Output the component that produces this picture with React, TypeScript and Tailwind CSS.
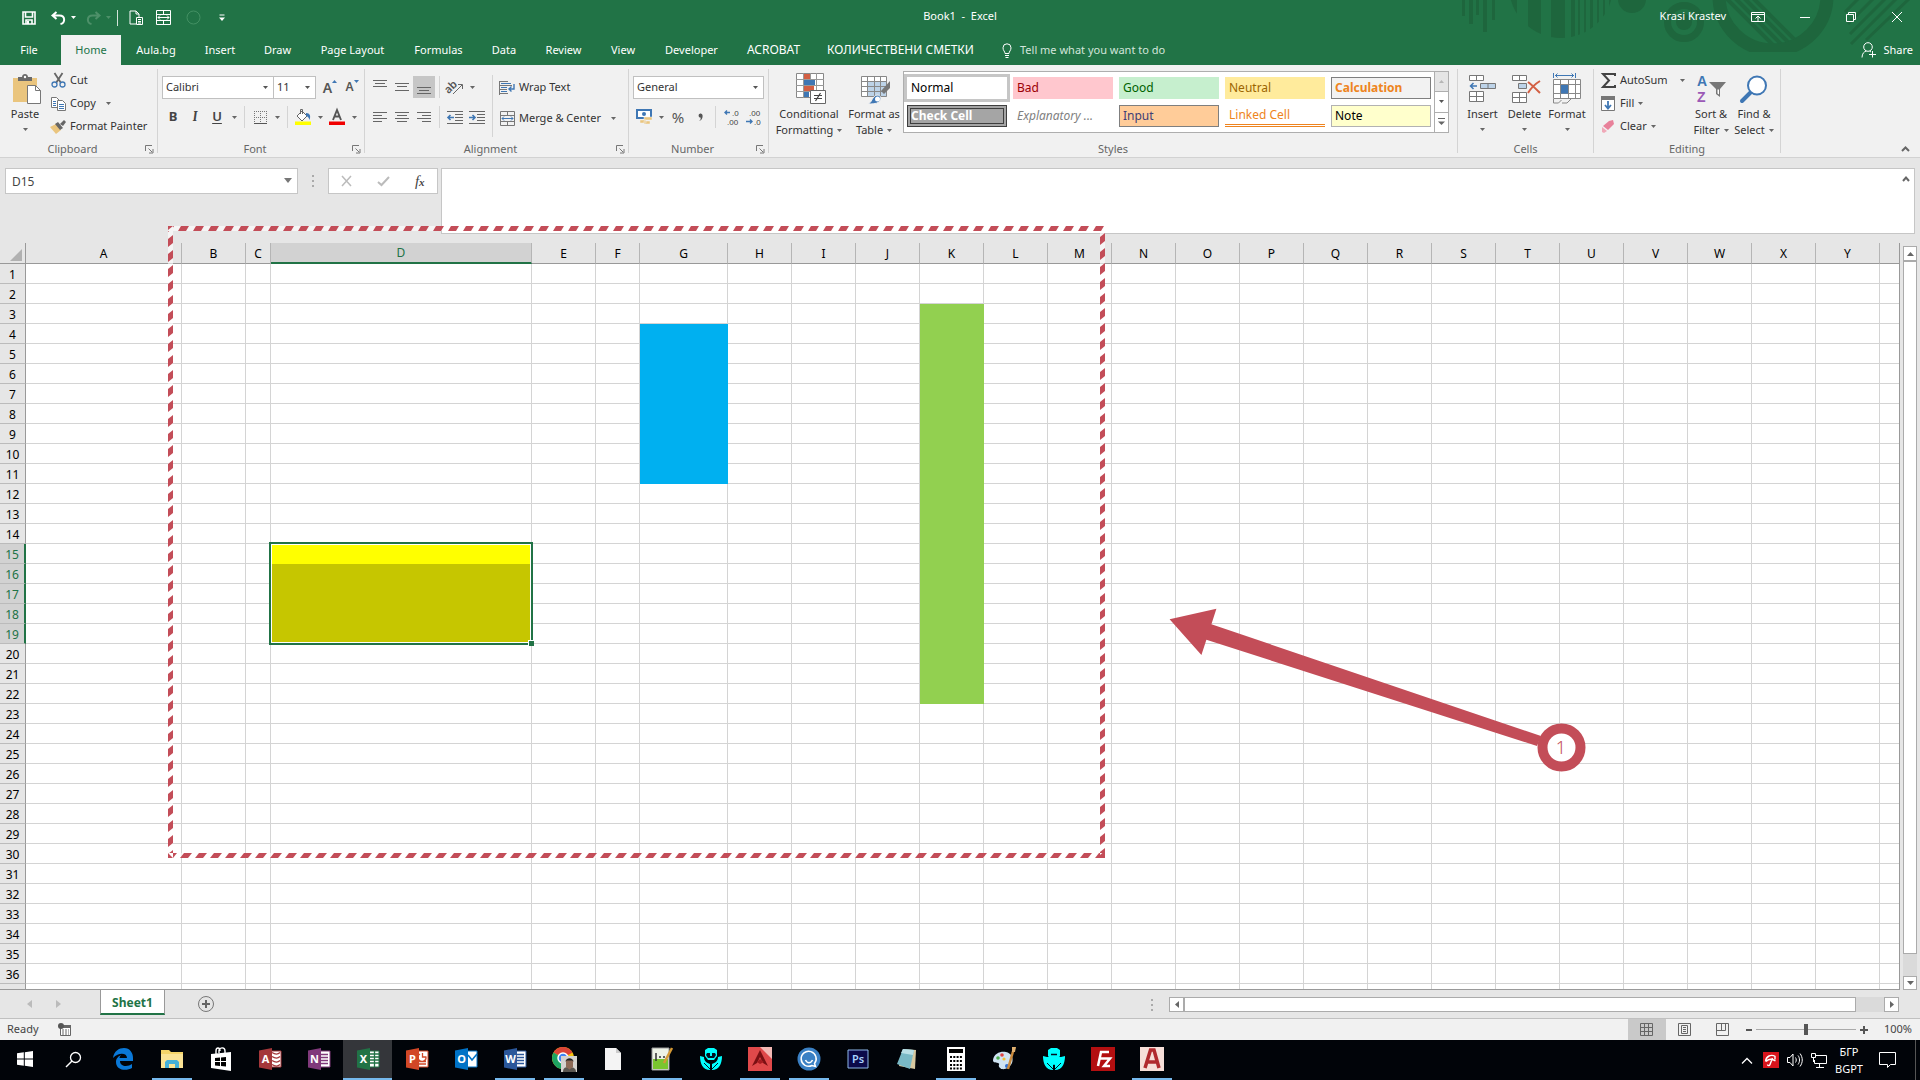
import type { ReactNode } from 'react';
import clsx from 'clsx';

const COLUMNS = [
  { name: 'A', width: 'w-[156px]' },
  { name: 'B', width: 'w-[64px]' },
  { name: 'C', width: 'w-[25px]' },
  { name: 'D', width: 'w-[261px]' },
  { name: 'E', width: 'w-[64px]' },
  { name: 'F', width: 'w-[44px]' },
  { name: 'G', width: 'w-[88px]' },
  ...'HIJKLMNOPQRSTUVWXY'.split('').map((name) => ({ name, width: 'w-[64px]' })),
];

const ROWS = Array.from({ length: 37 }, (_, i) => i + 1);

const TABS = [
  { label: 'Home', width: 'w-[60px]' },
  { label: 'Aula.bg', width: 'w-[70px]' },
  { label: 'Insert', width: 'w-[58px]' },
  { label: 'Draw', width: 'w-[57px]' },
  { label: 'Page Layout', width: 'w-[93px]' },
  { label: 'Formulas', width: 'w-[79px]' },
  { label: 'Data', width: 'w-[52px]' },
  { label: 'Review', width: 'w-[67px]' },
  { label: 'View', width: 'w-[52px]' },
  { label: 'Developer', width: 'w-[85px]' },
  { label: 'ACROBAT', width: 'w-[79px] text-[12px]' },
  { label: 'КОЛИЧЕСТВЕНИ СМЕТКИ', width: 'w-[175px] text-[12px]' },
];

const CELL_STYLES = [
  { label: 'Normal', look: 'pl-1 bg-white text-black outline-3 outline-[#c6c6c6]' },
  { label: 'Bad', look: 'pl-1 bg-[#ffc7ce] text-[#9c0006]' },
  { label: 'Good', look: 'pl-1 bg-[#c6efce] text-[#006100]' },
  { label: 'Neutral', look: 'pl-1 bg-[#ffeb9c] text-[#9c6500]' },
  { label: 'Calculation', look: 'pl-[3px] bg-[#f2f2f2] text-[#ee8420] font-bold border border-[#7f7f7f]' },
  { label: 'Check Cell', look: 'bg-[#a5a5a5] text-white font-bold border-4 border-double border-[#3f3f3f]' },
  { label: 'Explanatory ...', look: 'pl-1 bg-white text-[#7f7f7f] italic' },
  { label: 'Input', look: 'pl-[3px] bg-[#ffcc99] text-[#3f3f76] border border-[#7f7f7f]' },
  { label: 'Linked Cell', look: 'pl-1 bg-white text-[#ee8420] border-b-3 border-double border-[#ee8420]' },
  { label: 'Note', look: 'pl-[3px] bg-[#ffffcc] text-black border border-[#b2b2b2]' },
];

function cellFill(col: string, row: number) {
  if (col === 'G' && row >= 4 && row <= 11) return 'bg-[#00b0f0] border-[#00b0f0]';
  if (col === 'K' && row >= 3 && row <= 22) return 'bg-[#92d050] border-[#92d050]';
  if (col === 'D' && row === 15) return 'bg-[#ffff00] border-[#ffff00]';
  if (col === 'D' && row > 15 && row <= 19) return 'bg-[#c6c600] border-[#c6c600]';
  return 'border-[#d4d4d4]';
}

function Svg({ w, h, children, className }: { w: number; h: number; children: ReactNode; className?: string }) {
  return (
    <svg
      width={w}
      height={h}
      viewBox={`0 0 ${w} ${h}`}
      fill="none"
      className={clsx('shrink-0 overflow-visible', className)}
      aria-hidden="true"
    >
      {children}
    </svg>
  );
}

function Caret({ className }: { className?: string }) {
  return (
    <Svg w={5} h={3} className={className}>
      <path d="M0 0h5L2.5 3z" fill="currentColor" />
    </Svg>
  );
}

function Sep({ className }: { className?: string }) {
  return <div className={clsx('w-px shrink-0 bg-[#d4d4d4]', className)} />;
}

function IconButton({ label, children, active }: { label: string; children: ReactNode; active?: boolean }) {
  return (
    <button
      aria-label={label}
      className={clsx('flex h-[22px] w-[22px] shrink-0 items-center justify-center', active && 'bg-[#c6c6c6]')}
    >
      {children}
    </button>
  );
}

function CaretButton({ label }: { label: string }) {
  return (
    <button aria-label={label} className="flex h-[22px] w-3 shrink-0 items-center justify-center text-[#666]">
      <Caret />
    </button>
  );
}

function Combo({ label, value, className }: { label: string; value: string; className: string }) {
  return (
    <div className={clsx('relative h-[23px] shrink-0', className)}>
      <select
        aria-label={label}
        className="h-full w-full appearance-none border border-[#c0c0c0] bg-white pl-[3px] text-[11px] text-[#333]"
      >
        <option>{value}</option>
      </select>
      <Caret className="pointer-events-none absolute top-[10px] right-[6px] text-[#555]" />
    </div>
  );
}

function Group({ title, className, launcher, children }: { title: string; className: string; launcher?: boolean; children: ReactNode }) {
  return (
    <section className={clsx('flex shrink-0', className)}>
      <div className="flex min-w-0 flex-1 flex-col">
        <div className="flex min-h-0 flex-1">{children}</div>
        <div className="flex h-4 items-center text-[#666]">
          <span className="flex-1 text-center">{title}</span>
          {launcher && (
            <button aria-label={`${title} settings`} className="mr-[3px]">
              <Svg w={9} h={9}>
                <path d="M.5 6V.5H7M3.5 3.5L7 7M8 4v4H4" stroke="#777" />
              </Svg>
            </button>
          )}
        </div>
      </div>
      <Sep className="my-1" />
    </section>
  );
}

function BigButton({ icon, lines, className, inlineCaret }: { icon: ReactNode; lines: string[]; className: string; inlineCaret?: boolean }) {
  return (
    <button className={clsx('flex shrink-0 flex-col items-center pt-[7px]', className)}>
      <span className="flex h-[34px] items-center pb-px">{icon}</span>
      {lines.map((line, i) => (
        <span key={line} className="flex h-4 items-center gap-1 whitespace-nowrap">
          {line}
          {inlineCaret && i === lines.length - 1 && <Caret className="text-[#666]" />}
        </span>
      ))}
      {!inlineCaret && <Caret className="mt-[6px] text-[#666]" />}
    </button>
  );
}

function SmallButton({ icon, label, caret }: { icon: ReactNode; label: string; caret?: string }) {
  return (
    <button className="flex h-[23px] items-center whitespace-nowrap">
      <span className="mr-1 flex w-4 shrink-0 justify-center">{icon}</span>
      {label}
      {caret && <Caret className={clsx('text-[#666]', caret)} />}
    </button>
  );
}

function Lines({ spans }: { spans: number[][] }) {
  return (
    <Svg w={14} h={14}>
      {spans.map(([x, y, w]) => (
        <path key={y} d={`M${x} ${y + 0.5}h${w}`} stroke="#666" />
      ))}
    </Svg>
  );
}

function MergeIcon({ color, arrow }: { color: string; arrow: string }) {
  return (
    <Svg w={15} h={15}>
      <path d="M.5 .5h14v14H.5zM.5 4.5h14M.5 10.5h14M7.5 .5v4M7.5 10.5v4" stroke={color} />
      <path d="M2 7.5h11M4 5.5l-2 2 2 2M11 5.5l2 2-2 2" stroke={arrow} />
    </Svg>
  );
}

function TitleArt() {
  return (
    <svg className="absolute top-0 right-0" width="480" height="65" viewBox="0 0 480 65" fill="none" aria-hidden="true">
      <defs>
        <clipPath id="art-disc">
          <circle cx="121" cy="-14" r="52" />
        </clipPath>
        <clipPath id="art-inner">
          <circle cx="333" cy="-4" r="48" />
        </clipPath>
        <clipPath id="art-base">
          <path d="M0 0h480v52H0z" />
        </clipPath>
      </defs>
      <g fill="#1e663d">
        <path d="M22 0h3v16h-3zM29 0h4v24h-4zM36 0h3v15h-3zM43 0h4v32h-4zM52 0h3v20h-3z" />
        <g clipPath="url(#art-disc)">
          <path d="M70 0h7v40h-7zM88 0h13v40H88zM111 0h14v40h-14zM131 0h4v40h-4zM138 0h2v40h-2zM144 0h2v40h-2zM150 0h3v40h-3zM157 0h2v40h-2zM163 0h2v40h-2zM169 0h2v40h-2z" />
        </g>
        <circle cx="192" cy="-1" r="14" />
        <circle cx="244" cy="22" r="8" />
      </g>
      <g stroke="#1e663d">
        <circle cx="244" cy="22" r="16.500" strokeWidth="7" />
        <g clipPath="url(#art-base)">
          <circle cx="333" cy="-4" r="54" strokeWidth="13" />
        </g>
        <g clipPath="url(#art-inner)" strokeWidth="4">
          <path d="M280 -8l56 56M289 -8l56 56M298 -8l56 56M307 -8l56 56" />
        </g>
        <path d="M405 12l14 -14M408 24l26 -26M410 34l36 -36M411 44l46 -46M426 40l44 -42" strokeWidth="3" />
      </g>
    </svg>
  );
}

function TitleBar() {
  return (
    <div className="relative flex h-[35px] items-center text-white">
      <div className="flex flex-1 items-center pl-4">
        <button aria-label="Save" className="ml-[6px] w-[14px]">
          <Svg w={14} h={14}>
            <path d="M1 1h12v12H1zM3.500 1v5h7V1M4 13V9h6v4" stroke="#fff" strokeWidth="1.600" />
            <path d="M5 10h2v3H5z" fill="#fff" />
          </Svg>
        </button>
        <button aria-label="Undo" className="ml-[15px]">
          <Svg w={15} h={14}>
            <path d="M5.500 1L1.500 4.500 5.500 8M2 4.500h6.500c6 0 6 7.500 1 8.500" stroke="#fff" strokeWidth="2" />
          </Svg>
        </button>
        <button aria-label="Undo history" className="ml-[5px]">
          <Caret />
        </button>
        <button aria-label="Redo" className="ml-[10px]">
          <Svg w={15} h={14}>
            <path d="M9.500 1l4 3.500-4 3.500M13 4.500H6.500c-6 0-6 7.500-1 8.500" stroke="#4d9069" strokeWidth="2" />
          </Svg>
        </button>
        <button aria-label="Redo history" className="ml-[5px] text-[#4d9069]">
          <Caret />
        </button>
        <div className="mx-[6px] h-4 w-px bg-white/80" />
        <button aria-label="Paste" className="ml-[5px]">
          <Svg w={15} h={15}>
            <path d="M7 14H1V1h6l3 3v3M7 1v3h3M7.500 7.500h6v7h-6zM9 9.500h3M9 11.500h3M9 13h3" stroke="#fff" />
          </Svg>
        </button>
        <button aria-label="Merge cells" className="ml-3">
          <MergeIcon color="#fff" arrow="#fff" />
        </button>
        <button aria-label="Record" className="ml-[15px]">
          <Svg w={15} h={15}>
            <circle cx="7.500" cy="7.500" r="6.500" stroke="#439063" />
          </Svg>
        </button>
        <button aria-label="Customize toolbar" className="ml-[18px]">
          <Svg w={6} h={7}>
            <path d="M.5 1h5" stroke="#fff" />
            <path d="M0 3.500h6L3 7z" fill="#fff" />
          </Svg>
        </button>
      </div>
      <h1 className="pb-[3px] whitespace-pre">Book1  -  Excel</h1>
      <div className="flex flex-1 items-center justify-end pr-4 pb-[2px]">
        <span className="mr-[25px]">Krasi Krastev</span>
        <button aria-label="Ribbon display options" className="mr-[35px]">
          <Svg w={14} h={12}>
            <path d="M.5 1.500h13v9H.5zM.5 3.500h13M7 10V5.500M4.500 7.500L7 5l2.500 2.500" stroke="#fff" />
          </Svg>
        </button>
        <button aria-label="Minimize" className="mr-9">
          <Svg w={10} h={10}>
            <path d="M0 5.500h10" stroke="#fff" />
          </Svg>
        </button>
        <button aria-label="Restore" className="mr-9">
          <Svg w={10} h={10}>
            <path d="M.5 2.500h7v7h-7zM2.500 2V.5h7v7H8" stroke="#fff" />
          </Svg>
        </button>
        <button aria-label="Close" className="mr-[2px]">
          <Svg w={10} h={10}>
            <path d="M0 0l10 10M10 0L0 10" stroke="#fff" />
          </Svg>
        </button>
      </div>
    </div>
  );
}

function TabBar() {
  return (
    <nav className="relative flex h-[30px] text-white">
      <button className="w-[61px] pr-[3px] text-center">File</button>
      {TABS.map((tab, i) => (
        <button
          key={tab.label}
          className={clsx('shrink-0 text-center whitespace-nowrap', tab.width, i === 0 && 'bg-[#f1f1f1] text-[#217346]')}
        >
          {tab.label}
        </button>
      ))}
      <button className="ml-[14px] flex items-center gap-2 text-[#d3e5db]">
        <Svg w={10} h={15}>
          <path d="M3 10.500C3 8.500 1 7.500 1 4.800a4 4 0 0 1 8 0C9 7.500 7 8.500 7 10.500zM3 12.500h4M3.500 14.500h3" stroke="#fff" />
        </Svg>
        Tell me what you want to do
      </button>
      <button className="mr-[7px] ml-auto flex items-center gap-[7px]">
        <Svg w={15} h={16}>
          <circle cx="7" cy="5" r="4.300" stroke="#fff" />
          <path d="M1 15.500c.2-4 2-6 4.500-6.500M8.500 9l1.500 1M11.500 9v6.500M8 12.500h7" stroke="#fff" />
        </Svg>
        Share
      </button>
    </nav>
  );
}

function ClipboardGroup() {
  return (
    <Group title="Clipboard" className="w-[158px]" launcher>
      <BigButton
        className="w-[50px]"
        lines={['Paste']}
        icon={
          <Svg w={30} h={31} className="ml-1">
            <path d="M1 5h24v24H1z" fill="#eac57e" />
            <path d="M6 4h4c0-4 6-4 6 0h4v4H6z" fill="#6a6a6a" />
            <circle cx="13" cy="4" r="1.200" fill="#fff" />
            <path d="M15.500 12.500h8l5 5v13h-13z" fill="#fff" stroke="#777" />
            <path d="M23.500 12.500v5h5" stroke="#777" />
          </Svg>
        }
      />
      <div className="flex flex-col pt-[4px]">
        <SmallButton
          label="Cut"
          icon={
            <Svg w={15} h={15}>
              <path d="M3.500 0l6.500 10M11.500 0L5 10" stroke="#666" strokeWidth="1.800" />
              <circle cx="3.500" cy="11.500" r="2.500" stroke="#3f77b4" strokeWidth="1.300" />
              <circle cx="11.500" cy="11.500" r="2.500" stroke="#3f77b4" strokeWidth="1.300" />
            </Svg>
          }
        />
        <SmallButton
          label="Copy"
          caret="ml-[10px]"
          icon={
            <Svg w={15} h={14}>
              <path d="M.5 .5h5l3 3v7h-8z" fill="#fff" stroke="#777" />
              <path d="M2 4.500h3M2 6.500h3M2 8.500h3" stroke="#3f77b4" />
              <path d="M6.500 3.500h5l3 3v7h-8z" fill="#fff" stroke="#777" />
              <path d="M8 7.500h5M8 9.500h5M8 11.500h5" stroke="#3f77b4" />
            </Svg>
          }
        />
        <SmallButton
          label="Format Painter"
          icon={
            <Svg w={16} h={14}>
              <path d="M0 7l6-3 5 6-5 4z" fill="#eac57e" />
              <path d="M5 4l3-2 5 6-3 2zM10 4l4-4 2 2-3 4z" fill="#666" />
            </Svg>
          }
        />
      </div>
    </Group>
  );
}

function FontGroup() {
  return (
    <Group title="Font" className="w-[207px]" launcher>
      <div className="flex flex-col gap-[7px] pt-[11px] pl-1">
        <div className="flex">
          <Combo label="Font name" value="Calibri" className="w-[112px]" />
          <Combo label="Font size" value="11" className="mr-[3px] -ml-px w-[43px]" />
          <IconButton label="Increase font size">
            <span className="text-[14px] font-semibold text-[#555]">A</span>
            <Svg w={5} h={3} className="mb-3"><path d="M0 3h5L2.500 0z" fill="#3f77b4" /></Svg>
          </IconButton>
          <IconButton label="Decrease font size">
            <span className="text-[12px] font-semibold text-[#555]">A</span>
            <Svg w={5} h={3} className="mb-3"><path d="M0 0h5L2.500 3z" fill="#3f77b4" /></Svg>
          </IconButton>
        </div>
        <div className="flex text-[13px] text-[#444]">
          <IconButton label="Bold"><b>B</b></IconButton>
          <IconButton label="Italic"><i className="font-serif font-bold">I</i></IconButton>
          <IconButton label="Underline"><span className="font-semibold underline underline-offset-2">U</span></IconButton>
          <CaretButton label="Underline style" />
          <Sep className="mx-[4px]" />
          <IconButton label="Borders">
            <Svg w={13} h={13}>
              <path d="M.5 0v12M6.500 0v12M12.500 0v12M0 .5h13M0 6.500h13" stroke="#777" strokeDasharray="1 1" />
              <path d="M0 12.500h13" stroke="#555" />
            </Svg>
          </IconButton>
          <CaretButton label="Border style" />
          <Sep className="mx-[4px]" />
          <IconButton label="Fill color">
            <Svg w={16} h={16}>
              <path d="M2 7l5-5 5 5-5 5z" fill="#fff" stroke="#666" />
              <path d="M5.500 5V.5h2V5" stroke="#666" />
              <path d="M11 4c4 0 5 3 3.500 7-1-3-2-4-3.500-4z" fill="#3f77b4" />
              <path d="M0 12.500h16V16H0z" fill="#ff0" />
            </Svg>
          </IconButton>
          <CaretButton label="Fill colors" />
          <IconButton label="Font color">
            <Svg w={16} h={16}>
              <path d="M4 11L8 1l4 10M5.500 7.500h5" stroke="#555" strokeWidth="1.900" />
              <path d="M0 12.500h16V16H0z" fill="#f00000" />
            </Svg>
          </IconButton>
          <CaretButton label="Font colors" />
        </div>
      </div>
    </Group>
  );
}

function IndentIcon({ right }: { right?: boolean }) {
  return (
    <Svg w={16} h={13}>
      <path d="M0 .5h16M8 3.500h8M8 6.500h8M8 9.500h8M0 12.500h16" stroke="#666" />
      {right ? (
        <path d="M0 6.500h6M3.500 4L6 6.500 3.500 9" stroke="#3f77b4" strokeWidth="1.600" />
      ) : (
        <path d="M7 6.500H1M3.500 4L1 6.500 3.500 9" stroke="#3f77b4" strokeWidth="1.600" />
      )}
    </Svg>
  );
}

function AlignmentGroup() {
  return (
    <Group title="Alignment" className="w-[264px]" launcher>
      <div className="flex flex-col gap-2 pt-[11px] pl-1">
        <div className="flex">
          <IconButton label="Top align"><Lines spans={[[0, 0, 14], [2, 3, 10], [0, 6, 14]]} /></IconButton>
          <IconButton label="Middle align"><Lines spans={[[0, 3, 14], [2, 6, 10], [0, 10, 14]]} /></IconButton>
          <IconButton label="Bottom align" active><Lines spans={[[0, 7, 14], [2, 10, 10], [0, 13, 14]]} /></IconButton>
          <Sep className="mx-1" />
          <IconButton label="Orientation">
            <Svg w={16} h={15}>
              <text x="-2" y="10" transform="rotate(-45 5 8)" fontSize="11" fontWeight="600" fill="#555">ab</text>
              <path d="M6 14L15 5M11 4.500h4.500V9" stroke="#666" />
            </Svg>
          </IconButton>
          <CaretButton label="Orientation options" />
        </div>
        <div className="flex">
          <IconButton label="Align left"><Lines spans={[[0, 2, 14], [0, 5, 9], [0, 8, 14], [0, 11, 9]]} /></IconButton>
          <IconButton label="Center"><Lines spans={[[0, 2, 14], [2, 5, 10], [0, 8, 14], [2, 11, 10]]} /></IconButton>
          <IconButton label="Align right"><Lines spans={[[0, 2, 14], [5, 5, 9], [0, 8, 14], [5, 11, 9]]} /></IconButton>
          <Sep className="mx-1" />
          <IconButton label="Decrease indent"><IndentIcon /></IconButton>
          <IconButton label="Increase indent"><IndentIcon right /></IconButton>
        </div>
      </div>
      <Sep className="mt-[10px] mr-[6px] mb-1 ml-[4px]" />
      <div className="flex flex-col gap-2 pt-[11px]">
        <SmallButton
          label="Wrap Text"
          icon={
            <Svg w={16} h={15}>
              <path d="M.5 1v14" stroke="#777" />
              <path d="M1 1.500h8M1 5.500h12M1 9.500h7M1 13.500h8" stroke="#777" />
              <path d="M2 3.500h10M2 7.500h6M2 11.500h6" stroke="#3f77b4" />
              <path d="M15 4v5H10M12.500 6.500L10 9l2.500 2.500" stroke="#3f77b4" strokeWidth="1.400" />
            </Svg>
          }
        />
        <SmallButton label="Merge & Center" caret="ml-[10px]" icon={<MergeIcon color="#777" arrow="#3f77b4" />} />
      </div>
    </Group>
  );
}

function NumberGroup() {
  return (
    <Group title="Number" className="w-[140px]" launcher>
      <div className="flex flex-col gap-[7px] pt-[11px] pl-1">
        <Combo label="Number format" value="General" className="w-[131px]" />
        <div className="flex text-[#555]">
          <IconButton label="Accounting format">
            <Svg w={17} h={16}>
              <path d="M1 1h14v8H1z" fill="#fff" stroke="#3f77b4" strokeWidth="2" />
              <circle cx="8" cy="5" r="2" fill="#3f77b4" />
              <path d="M8 8h8v3H8zM8 12h6v3H8zM4 11h6v3H4z" fill="#eac57e" stroke="#f1f1f1" strokeWidth=".5" />
            </Svg>
          </IconButton>
          <CaretButton label="Accounting formats" />
          <IconButton label="Percent style"><span className="text-[15px]">%</span></IconButton>
          <IconButton label="Comma style">
            <Svg w={5} h={8}>
              <path d="M1 8c1.500-1 2-2 1.500-3.500A2 2 0 1 1 4.500 2C5 5 3.500 7.500 1 8z" fill="#555" />
            </Svg>
          </IconButton>
          <Sep className="mx-[4px]" />
          <IconButton label="Increase decimal">
            <Svg w={15} h={16} className="font-['Liberation_Sans',sans-serif]">
              <path d="M6 3.500H1M3 1.500l-2 2 2 2" stroke="#3f77b4" strokeWidth="1.400" />
              <text x="8" y="7" fontSize="8" fill="#444">.0</text>
              <text x="3" y="16" fontSize="8" fill="#444">.00</text>
            </Svg>
          </IconButton>
          <IconButton label="Decrease decimal">
            <Svg w={15} h={16} className="font-['Liberation_Sans',sans-serif]">
              <path d="M0 12.500h6M4 10.500l2 2-2 2" stroke="#3f77b4" strokeWidth="1.400" />
              <text x="3" y="7" fontSize="8" fill="#444">.00</text>
              <text x="8" y="16" fontSize="8" fill="#444">.0</text>
            </Svg>
          </IconButton>
        </div>
      </div>
    </Group>
  );
}

function StylesGroup() {
  return (
    <Group title="Styles" className="w-[689px]">
      <BigButton
        inlineCaret
        className="w-[80px]"
        lines={['Conditional', 'Formatting']}
        icon={
          <Svg w={30} h={31} className="ml-1">
            <path d="M.5 .5h27v24H.5z" fill="#fff" stroke="#888" />
            <path d="M8 1h6v5H8zM8 13h10v5H8z" fill="#d35f43" />
            <path d="M8 7h11v5H8zM8 19h5v5H8z" fill="#3f77b4" />
            <path d="M0 6.500h28M0 12.500h28M0 18.500h28M7.500 0v25M14.500 0v6M20.500 0v25" stroke="#999" />
            <path d="M14.500 17.500h15v13h-15z" fill="#fff" stroke="#666" />
            <path d="M18 22.500h8M18 25.500h8M24.500 20l-5 8" stroke="#444" strokeWidth="1.200" />
          </Svg>
        }
      />
      <BigButton
        inlineCaret
        className="w-[50px]"
        lines={['Format as', 'Table']}
        icon={
          <Svg w={30} h={30} className="ml-1">
            <path d="M.5 2.500h25v20H.5z" fill="#fff" />
            <path d="M7 8h19v15H7z" fill="#bdd3e8" />
            <path d="M.5 2.500h25v20H.5zM.5 7.500h25M.5 12.500h25M.5 17.500h25M6.500 2.500v20M13.500 2.500v20M19.500 2.500v20" stroke="#888" />
            <path d="M29 7v7l-6 6-3-3z" fill="#777" />
            <path d="M7 30c4-1 4-8 9-9 4 0 5 4 2 7-3 2-7 2-11 2z" fill="#3f77b4" stroke="#f1f1f1" />
            <circle cx="16.500" cy="25" r="2.500" fill="#fff" />
          </Svg>
        }
      />
      <div className="mt-[6px] ml-1 flex h-[62px] border border-[#aeaeae] bg-white">
        <div className="grid grid-cols-5 content-start gap-[6px] p-[3px] pt-[5px]">
          {CELL_STYLES.map((style) => (
            <button key={style.label} className={clsx('h-[22px] w-[100px] text-left text-[12px] leading-[14px]', style.look)}>
              {style.label}
            </button>
          ))}
        </div>
        <div className="flex w-[14px] flex-col border-l border-[#aeaeae] text-[#555]">
          <button aria-label="Scroll styles up" className="flex flex-1 items-center justify-center bg-[#e5e5e5] text-[#b5b5b5]">
            <Caret className="rotate-180" />
          </button>
          <button aria-label="Scroll styles down" className="flex flex-1 items-center justify-center border-y border-[#aeaeae]">
            <Caret />
          </button>
          <button aria-label="More styles" className="flex flex-1 items-center justify-center">
            <Svg w={7} h={8}>
              <path d="M0 .5h7" stroke="#666" />
              <path d="M0 3.500h7L3.500 7z" fill="#666" />
            </Svg>
          </button>
        </div>
      </div>
    </Group>
  );
}

function CellsGroup() {
  return (
    <Group title="Cells" className="w-[136px]">
      <BigButton
        className="ml-1 w-[41px]"
        lines={['Insert']}
        icon={
          <Svg w={27} h={28}>
            <path d="M.5 .5h14v5H.5zM7.500 .5v5M.5 16.500h14v10H.5zM7.500 16.500v10M.5 21.500h14" fill="#fff" stroke="#777" />
            <path d="M11.500 8.500h15v5h-15zM19 8.500v5" fill="#bdd3e8" stroke="#777" />
            <path d="M8 11H2M4.500 8L1.500 11l3 3" stroke="#3f77b4" strokeWidth="1.500" />
          </Svg>
        }
      />
      <BigButton
        className="w-[43px]"
        lines={['Delete']}
        icon={
          <Svg w={30} h={28} className="ml-1">
            <path d="M.5 .5h14v5H.5zM7.500 .5v5M.5 17.500h14v10H.5zM7.500 17.500v10M.5 22.500h14" fill="#fff" stroke="#777" />
            <path d="M6.500 8.500h8v5h-8z" fill="#bdd3e8" stroke="#777" />
            <path d="M16 7c4 3 8 7 12 11M28 6c-5 3-9 7-12 12" stroke="#d35f43" strokeWidth="2" />
          </Svg>
        }
      />
      <BigButton
        className="w-[42px]"
        lines={['Format']}
        icon={
          <Svg w={28} h={31}>
            <path d="M.5 0v5M22.500 0v5M2 2.500h19M4.500 .5l-2 2 2 2M18.500 .5l2 2-2 2" stroke="#3f77b4" />
            <path d="M.5 6.500h27v19H.5z" fill="#fff" />
            <path d="M.5 6.500h27v19H.5zM.5 11.500h27M.5 20.500h27M7.500 6.500v19M15.500 6.500v19M22.500 6.500v19" stroke="#888" />
            <path d="M8 12h7v8.500H8z" fill="#3f77b4" />
            <path d="M.5 26v4h5l3-3M9 30h5l4-4" stroke="#888" />
          </Svg>
        }
      />
    </Group>
  );
}

function EditingGroup() {
  return (
    <Group title="Editing" className="w-[187px]">
      <div className="flex w-[94px] flex-col pt-[4px] pl-[6px]">
        <SmallButton
          label="AutoSum"
          caret="ml-3"
          icon={
            <Svg w={15} h={15}>
              <path d="M14 3V1H2l6 6.500L2 14h12v-2" stroke="#444" strokeWidth="2" />
            </Svg>
          }
        />
        <SmallButton
          label="Fill"
          caret="ml-1"
          icon={
            <Svg w={14} h={15}>
              <path d="M.5 .5h13v14H.5z" fill="#fff" stroke="#777" />
              <path d="M0 0h14v4H0z" fill="#777" />
              <path d="M7 5v7M4 9l3 3.500L10 9" stroke="#3f77b4" strokeWidth="1.800" />
            </Svg>
          }
        />
        <SmallButton
          label="Clear"
          caret="ml-1"
          icon={
            <Svg w={14} h={14}>
              <path d="M8 1l4-1 1 4-6 6-5-4z" fill="#e8819a" />
              <path d="M1 7l5 4-3 2-2-1z" fill="#f0a9b8" />
            </Svg>
          }
        />
      </div>
      <BigButton
        inlineCaret
        className="w-[46px]"
        lines={['Sort &', 'Filter']}
        icon={
          <Svg w={29} h={29} className="font-['Liberation_Sans',sans-serif]">
            <text x="0" y="12" fontSize="14" fontWeight="700" fill="#3f77b4">A</text>
            <text x="0" y="28" fontSize="14" fontWeight="700" fill="#9b59b6">Z</text>
            <path d="M12 8h17l-6 7v8l-4-3v-5z" fill="#777" />
            <path d="M20.500 15.500v4l1.500 1v-5" fill="#fff" />
          </Svg>
        }
      />
      <BigButton
        inlineCaret
        className="w-[40px]"
        lines={['Find &', 'Select']}
        icon={
          <Svg w={28} h={28}>
            <path d="M2 26l9-9" stroke="#3f77b4" strokeWidth="4" strokeLinecap="round" />
            <circle cx="17" cy="10.500" r="9" fill="#fff" stroke="#3f77b4" strokeWidth="2" />
          </Svg>
        }
      />
    </Group>
  );
}

function Ribbon() {
  return (
    <div className="flex h-[93px] shrink-0 border-b border-[#d2d2d2] bg-[#f1f1f1] text-[#333]">
      <ClipboardGroup />
      <FontGroup />
      <AlignmentGroup />
      <NumberGroup />
      <StylesGroup />
      <CellsGroup />
      <EditingGroup />
      <button aria-label="Collapse ribbon" className="mt-auto mr-[10px] mb-[5px] ml-auto">
        <Svg w={9} h={6}>
          <path d="M1 5l3.500-3.500L8 5" stroke="#666" strokeWidth="2" />
        </Svg>
      </button>
    </div>
  );
}

function FormulaBar() {
  return (
    <div className="flex h-[85px] shrink-0 items-start pt-[10px] pr-[5px] pl-[5px]">
      <div className="relative h-[26px] w-[293px]">
        <input
          aria-label="Name box"
          defaultValue="D15"
          className="h-full w-full border border-[#c6c6c6] bg-white px-[6px] text-[12px] text-[#444]"
        />
        <Svg w={8} h={5} className="pointer-events-none absolute top-[10px] right-[6px]">
          <path d="M0 0h8L4 5z" fill="#777" />
        </Svg>
      </div>
      <div className="mt-[7px] mr-[14px] ml-[14px] flex flex-col gap-[3px]">
        <i className="h-[2px] w-[2px] bg-[#aaa]" />
        <i className="h-[2px] w-[2px] bg-[#aaa]" />
        <i className="h-[2px] w-[2px] bg-[#aaa]" />
      </div>
      <div className="flex h-[26px] w-[110px] items-center justify-around border border-[#c6c6c6] bg-white">
        <button aria-label="Cancel">
          <Svg w={11} h={10}><path d="M1 0l9 10M10 0L1 10" stroke="#bbb" strokeWidth="1.500" /></Svg>
        </button>
        <button aria-label="Enter">
          <Svg w={13} h={10}><path d="M1 6l3.500 3L12 1" stroke="#bbb" strokeWidth="2" /></Svg>
        </button>
        <button aria-label="Insert function" className="font-['Liberation_Serif',serif] text-[15px] leading-none text-[#444] italic">
          f<span className="text-[11px] font-bold">x</span>
        </button>
      </div>
      <div className="relative ml-[3px] h-[66px] flex-1">
        <textarea aria-label="Formula" className="block h-full w-full resize-none border border-[#c6c6c6] bg-white" />
        <button aria-label="Collapse formula bar" className="absolute top-2 right-[5px]">
          <Svg w={8} h={6}><path d="M1 5l3-3.500L7 5" stroke="#666" strokeWidth="2" /></Svg>
        </button>
      </div>
    </div>
  );
}

function Sheet() {
  return (
    <div className="min-w-0 flex-1 overflow-hidden border-r border-b border-[#999]">
      <table className="w-full table-fixed border-separate border-spacing-0 bg-white text-[12px] text-black">
        <colgroup>
          <col className="w-[26px]" />
          {COLUMNS.map((col) => (
            <col key={col.name} className={col.width} />
          ))}
          <col />
        </colgroup>
        <thead>
          <tr className="h-[21px] bg-[#e6e6e6]">
            <th aria-label="Select all" className="border-r border-b border-[#999] p-0">
              <Svg w={12} h={12} className="mt-1 ml-[10px]"><path d="M12 0v12H0z" fill="#b1b1b1" /></Svg>
            </th>
            {COLUMNS.map((col) => (
              <th
                key={col.name}
                scope="col"
                className={clsx(
                  'border-r p-0 pt-px leading-[18px] font-normal',
                  col.name === 'D'
                    ? 'border-b-2 border-r-[#b5b5b5] border-b-[#217346] bg-[#d2d2d2] text-[#217346]'
                    : 'border-b border-r-[#b5b5b5] border-b-[#999]',
                )}
              >
                {col.name}
              </th>
            ))}
            <th className="border-b border-[#999] p-0" />
          </tr>
        </thead>
        <tbody>
          {ROWS.map((row) => {
            const selected = row >= 15 && row <= 19;
            return (
              <tr key={row} className="h-5">
                <th
                  scope="row"
                  className={clsx(
                    'border-b border-b-[#bbb] p-0 pt-[2px] leading-[17px] font-normal',
                    selected ? 'border-r-2 border-r-[#217346] bg-[#d2d2d2] text-[#217346]' : 'border-r border-r-[#999] bg-[#e6e6e6]',
                  )}
                >
                  {row}
                </th>
                {COLUMNS.map((col) => (
                  <td key={col.name} className={clsx('relative border-r border-b p-0', cellFill(col.name, row))}>
                    {col.name === 'D' && row === 15 && (
                      <div className="absolute -top-[2px] -left-[2px] z-10 h-[103px] w-[264px] border-2 border-[#217346] ring-1 ring-white ring-inset">
                        <span className="absolute -right-[3px] -bottom-[3px] h-[6px] w-[6px] border-t border-l border-white bg-[#217346]" />
                      </div>
                    )}
                  </td>
                ))}
                <td className="border-b border-[#d4d4d4] p-0" />
              </tr>
            );
          })}
        </tbody>
      </table>
    </div>
  );
}

function VerticalScroll() {
  return (
    <div className="mt-[3px] flex w-[20px] flex-col pl-[3px]">
      <button aria-label="Scroll up" className="flex h-[15px] w-[14px] items-center justify-center border border-[#ababab] bg-white">
        <Svg w={7} h={4}><path d="M0 4h7L3.500 0z" fill="#666" /></Svg>
      </button>
      <div className="w-[14px] flex-1 bg-[#dadada] pb-[22px]">
        <div className="h-full border border-[#ababab] bg-white" />
      </div>
      <button aria-label="Scroll down" className="flex h-[14px] w-[14px] items-center justify-center border border-[#ababab] bg-white">
        <Svg w={7} h={4}><path d="M0 0h7L3.500 4z" fill="#666" /></Svg>
      </button>
    </div>
  );
}

function SheetTabs() {
  return (
    <div className="flex h-7 shrink-0 items-start">
      <div className="flex h-full w-[100px] items-center gap-[24px] pl-[27px]">
        <button aria-label="Previous sheet"><Svg w={5} h={8}><path d="M5 0v8L0 4z" fill="#bbb" /></Svg></button>
        <button aria-label="Next sheet"><Svg w={5} h={8}><path d="M0 0v8l5-4z" fill="#bbb" /></Svg></button>
      </div>
      <button className="h-[25px] w-[65px] border-x border-b-2 border-x-[#999] border-b-[#217346] bg-white pt-[2px] text-[12px] font-bold text-[#217346]">
        Sheet1
      </button>
      <button aria-label="New sheet" className="mt-[6px] ml-[33px]">
        <Svg w={16} h={16}>
          <circle cx="8" cy="8" r="7.500" stroke="#777" />
          <path d="M8 4v8M4 8h8" stroke="#666" strokeWidth="2" />
        </Svg>
      </button>
      <div className="mt-[9px] mr-4 ml-auto flex flex-col gap-[3px]">
        <i className="h-[2px] w-[2px] bg-[#aaa]" />
        <i className="h-[2px] w-[2px] bg-[#aaa]" />
        <i className="h-[2px] w-[2px] bg-[#aaa]" />
      </div>
      <div className="mt-[7px] mr-[21px] flex h-[15px] w-[730px]">
        <button aria-label="Scroll left" className="flex w-[15px] items-center justify-center border border-[#ababab] bg-white">
          <Svg w={4} h={7}><path d="M4 0v7L0 3.500z" fill="#666" /></Svg>
        </button>
        <div className="flex-1 bg-[#dadada] pr-7">
          <div className="h-full border border-[#ababab] bg-white" />
        </div>
        <button aria-label="Scroll right" className="flex w-[15px] items-center justify-center border border-[#ababab] bg-white">
          <Svg w={4} h={7}><path d="M0 0v7l4-3.500z" fill="#666" /></Svg>
        </button>
      </div>
    </div>
  );
}

function StatusBar() {
  return (
    <div className="flex h-[22px] shrink-0 items-center border-t border-[#c0c0c0] bg-[#f1f1f1] text-[#444]">
      <span className="w-[58px] pl-[7px]">Ready</span>
      <button aria-label="Record macro">
        <Svg w={13} h={13}>
          <path d="M2.500 2.500h10v10h-10z" fill="#fff" stroke="#666" />
          <path d="M2 2h11v3H2z" fill="#666" />
          <path d="M4 7h7M4 9h7M4 11h7" stroke="#666" strokeDasharray="2 1" />
          <circle cx="3" cy="3" r="3" fill="#555" />
        </Svg>
      </button>
      <div className="ml-auto flex h-full items-center">
        <button aria-label="Normal view" className="flex h-full w-[38px] items-center justify-center bg-[#c9c9c9]">
          <Svg w={13} h={13}><path d="M.5 .5h12v12H.5zM4.500 .5v12M8.500 .5v12M.5 4.500h12M.5 8.500h12" stroke="#666" /></Svg>
        </button>
        <button aria-label="Page layout view" className="flex h-full w-[38px] items-center justify-center">
          <Svg w={13} h={13}><path d="M.5 .5h12v12H.5zM3.500 2.500h6v8h-6zM5 4.500h3M5 6.500h3M5 8.500h3" stroke="#666" /></Svg>
        </button>
        <button aria-label="Page break view" className="flex h-full w-[38px] items-center justify-center">
          <Svg w={13} h={13}><path d="M.5 .5h12v12H.5zM5.500 .5v7M9.500 .5v7h-9" stroke="#666" /></Svg>
        </button>
        <button aria-label="Zoom out" className="ml-1">
          <Svg w={6} h={8}><path d="M0 4h6" stroke="#555" strokeWidth="2" /></Svg>
        </button>
        <input
          type="range"
          aria-label="Zoom"
          defaultValue={50}
          className="mx-1 h-3 w-[100px] appearance-none bg-[linear-gradient(#aaa,#aaa)] bg-[length:100%_1px] bg-center bg-no-repeat [&::-webkit-slider-thumb]:h-[11px] [&::-webkit-slider-thumb]:w-1 [&::-webkit-slider-thumb]:appearance-none [&::-webkit-slider-thumb]:bg-[#555]"
        />
        <button aria-label="Zoom in">
          <Svg w={8} h={8}><path d="M0 4h8M4 0v8" stroke="#555" strokeWidth="2" /></Svg>
        </button>
        <button className="mr-2 ml-4">100%</button>
      </div>
    </div>
  );
}

function OfficeIcon({ color, letter, children }: { color: string; letter: string; children?: ReactNode }) {
  return (
    <Svg w={24} h={24}>
      <path d="M13 4h10v16H13z" fill="#fff" stroke={color} />
      {children ?? <path d="M14 7.500h7M14 10.500h7M14 13.500h7M14 16.500h7" stroke={color} strokeWidth="1.300" />}
      <path d="M1 3.500L14 1v22L1 20.500z" fill={color} />
      <text x="7.500" y="16" fontSize="11" fontWeight="700" fill="#fff" textAnchor="middle">{letter}</text>
    </Svg>
  );
}

function TulipIcon({ solid }: { solid?: boolean }) {
  return (
    <Svg w={24} h={24}>
      <path d="M6 3l3-2h6l3 2v6l-3 4H9L6 9z" fill="#0ff" />
      {solid ? (
        <path d="M9 7.500h6M12 11v3" stroke="#012" strokeWidth="1.500" />
      ) : (
        <>
          <path d="M8 6h8l1 2-2 3H9L7 8z" fill="#012" />
          <path d="M12 5v4" stroke="#0ff" strokeWidth="2" />
        </>
      )}
      <path d="M1 9l4 1c0 4 3 6 6 7v6C4 23 1 17 1 9zM23 9l-4 1c0 4-3 6-6 7v6c7 0 10-6 10-14z" fill="#0ff" />
      {solid && <path d="M1 10h22l-4 5-7 3-7-3z" fill="#0ff" />}
      <path d="M5 16l6 6M19 16l-6 6" stroke="#012" />
    </Svg>
  );
}

const TASKS: { name: string; icon: ReactNode; open?: boolean; active?: boolean }[] = [
  {
    name: 'Start',
    icon: <Svg w={16} h={16}><path d="M0 2.300L6.800 1.300V7.500H0zM7.800 1.200L16 0v7.500H7.800zM0 8.500h6.800v6.200L0 13.700zM7.800 8.500H16V16l-8.200-1.200z" fill="#fff" /></Svg>,
  },
  {
    name: 'Search',
    icon: <Svg w={17} h={17}><circle cx="10.500" cy="6.500" r="5" stroke="#fff" strokeWidth="1.300" /><path d="M7 10L1 16" stroke="#fff" strokeWidth="1.500" /></Svg>,
  },
  {
    name: 'Edge',
    icon: <Svg w={22} h={22}><path d="M1 10C2 3 7 0 12 0c6 0 9 5 9 10v3H8c0 6 8 6 12 3v4c-5 3-16 3-16-6 0-4 3-6 5-7-1 1-1.500 2-1.500 3H15c0-5-8-6-14 0z" fill="#0a78d7" /></Svg>,
  },
  {
    name: 'File Explorer',
    open: true,
    icon: (
      <Svg w={22} h={20}>
        <path d="M0 1h8l2 2h12v16H0z" fill="#f5d469" />
        <path d="M0 5h22v14H0z" fill="#fbe395" />
        <path d="M4 19v-6l2-2h10l2 2v6h-4v-4H8v4z" fill="#45b0d9" />
      </Svg>
    ),
  },
  {
    name: 'Store',
    icon: (
      <Svg w={22} h={24}>
        <path d="M1 7l20-2v19L1 21z" fill="#fff" />
        <path d="M6 9V4c0-4 4-4 4 0M9 6V3c1-3 6-3 6 1v3" stroke="#fff" strokeWidth="1.400" />
        <path d="M5 11l5-.5V14H5zM11 10.400l5-.5V14h-5zM5 15h5v4l-5-.5zM11 15h5v4.500l-5-.5z" fill="#000" />
      </Svg>
    ),
  },
  {
    name: 'Access',
    icon: (
      <OfficeIcon color="#a4373a" letter="A">
        <path d="M14 5.500c3 2 6 2 8 0M14 9.500c3 2 6 2 8 0M14 13.500c3 2 6 2 8 0M14 17.500c3 2 6 2 8 0" stroke="#a4373a" strokeWidth="1.300" />
      </OfficeIcon>
    ),
  },
  { name: 'OneNote', icon: <OfficeIcon color="#80397b" letter="N" /> },
  {
    name: 'Excel',
    open: true,
    active: true,
    icon: (
      <OfficeIcon color="#217346" letter="X">
        <path d="M14 7h9M14 10h9M14 13h9M14 16h9M18.500 4v16" stroke="#217346" strokeWidth="1.300" />
      </OfficeIcon>
    ),
  },
  {
    name: 'PowerPoint',
    icon: (
      <OfficeIcon color="#d24726" letter="P">
        <path d="M17.500 6v4h4M14 14.500h7M14 17h7M21 10a4 4 0 1 1-6-3" stroke="#d24726" strokeWidth="1.300" />
      </OfficeIcon>
    ),
  },
  {
    name: 'Outlook',
    icon: (
      <OfficeIcon color="#0072c6" letter="O">
        <path d="M14 8l4 5 5-6" stroke="#0072c6" strokeWidth="1.600" />
      </OfficeIcon>
    ),
  },
  { name: 'Word', open: true, icon: <OfficeIcon color="#2b579a" letter="W" /> },
  {
    name: 'Chrome',
    open: true,
    icon: (
      <Svg w={26} h={26}>
        <circle cx="12" cy="12" r="11" fill="#f4c20d" />
        <path d="M12 12L2.500 6.500A11 11 0 0 1 21.500 6.500z" fill="#dc4437" />
        <path d="M12 12L2.500 6.500A11 11 0 0 0 11 23z" fill="#1da462" />
        <circle cx="12" cy="12" r="5" fill="#4285f4" stroke="#fff" strokeWidth="1.500" />
        <path d="M10 10h16v16H10z" fill="#d5d3cf" />
        <path d="M12 26c0-4 2-5 6-5s7 1 7 5z" fill="#5b564f" />
        <path d="M15 14h7v7l-3.500 2.500L15 21z" fill="#8d6a56" />
        <path d="M14.500 16c0-5 8-5 8 0l-1-1.500h-6z" fill="#222" />
      </Svg>
    ),
  },
  {
    name: 'Document',
    icon: <Svg w={16} h={22}><path d="M0 0h11l5 5v17H0z" fill="#f4f4f4" /><path d="M11 0v5h5" fill="#ccc" /></Svg>,
  },
  {
    name: 'Notepad++',
    open: true,
    icon: (
      <Svg w={22} h={24}>
        <path d="M1 1h17v22H1z" fill="#eef3e6" stroke="#999" />
        <path d="M2 12h15v10H2z" fill="#7ac52f" />
        <path d="M5 6v8M8 10h2M12 10h2" stroke="#333" strokeWidth="1.500" />
        <path d="M21 1l-8 15" stroke="#d69a35" strokeWidth="2.500" />
      </Svg>
    ),
  },
  { name: 'Tulip', icon: <TulipIcon /> },
  {
    name: 'AutoCAD',
    open: true,
    icon: (
      <Svg w={24} h={24}>
        <path d="M0 0h24v24H0z" fill="#e0494a" />
        <path d="M12 0h12v12z" fill="#f3b9b5" />
        <path d="M12 3l8 16-5-3-3-6-3 6-5 3z" fill="#7a1013" />
        <path d="M9 15l3-3 4 3-4 2z" fill="#a51b1f" />
      </Svg>
    ),
  },
  {
    name: 'Q',
    open: true,
    icon: (
      <Svg w={24} h={24}>
        <circle cx="12" cy="12" r="11.500" fill="#3a80c4" />
        <path d="M17.500 16.500a7.500 7.500 0 1 0-2.500 2l3.500 1z" stroke="#fff" strokeWidth="1.500" />
        <path d="M8.500 13c1.500 3.500 5.500 3.500 7 0" stroke="#fff" strokeWidth="1.500" />
      </Svg>
    ),
  },
  {
    name: 'Photoshop',
    icon: (
      <Svg w={22} h={20}>
        <path d="M1 1h20v18H1z" fill="#0b0a4a" stroke="#8fb8ea" />
        <text x="11" y="14" fontSize="11" fontWeight="600" fill="#a9d3ff" textAnchor="middle">Ps</text>
      </Svg>
    ),
  },
  {
    name: 'Notepad',
    icon: (
      <Svg w={24} h={24}>
        <path d="M8 2l13 1-1 19-16-3z" fill="#d8c9a0" />
        <path d="M8 2l11 1-4 19L2 17z" fill="#79b9c6" />
        <path d="M8 2l11 1-1 5L6 6z" fill="#b9dfe6" />
      </Svg>
    ),
  },
  {
    name: 'Calculator',
    open: true,
    icon: (
      <Svg w={18} h={24}>
        <path d="M0 0h18v24H0z" fill="#fff" />
        <path d="M2 2h14v4H2z" fill="#000" />
        <path d="M3 10h12M3 14h12M3 18h12M3 21.500h12" stroke="#000" strokeWidth="2" strokeDasharray="2 1.300" />
      </Svg>
    ),
  },
  {
    name: 'Paint',
    icon: (
      <Svg w={25} h={24}>
        <path d="M1 13C2 6 9 4 14 5s8 6 6 11-9 8-12 5 1-4-2-5-5 0-5-3z" fill="#cfe3f2" />
        <circle cx="6" cy="11" r="1.800" fill="#4caf50" />
        <circle cx="10" cy="8" r="1.800" fill="#e04444" />
        <circle cx="15" cy="19" r="2" fill="#2f6fd0" />
        <circle cx="12" cy="12" r="1.600" fill="#f2c037" />
        <path d="M22 1l-6 21" stroke="#c9893c" strokeWidth="2.500" />
        <path d="M20 0h4l-1 5h-3z" fill="#e0b070" />
      </Svg>
    ),
  },
  { name: 'Tulip viewer', icon: <TulipIcon solid /> },
  {
    name: 'FileZilla',
    icon: (
      <Svg w={24} h={24}>
        <path d="M0 0h24v24H0z" fill="#b30f10" />
        <path d="M7 19L10 5h8M8 11.500h6M13 11.500h6l-6 7.500h6" stroke="#fff" strokeWidth="2.500" />
      </Svg>
    ),
  },
  {
    name: 'AutoCAD LT',
    open: true,
    icon: (
      <Svg w={24} h={24}>
        <path d="M0 0h24v24H0z" fill="#f6dfd9" />
        <path d="M5 21L10.500 3h3.500l5 18M8 15h9" stroke="#b02a2e" strokeWidth="3.500" />
      </Svg>
    ),
  },
];

function Taskbar() {
  return (
    <footer className="flex h-10 shrink-0 bg-[#010409] text-white">
      {TASKS.map((task) => (
        <button
          key={task.name}
          aria-label={task.name}
          className={clsx('flex w-[49px] shrink-0 flex-col items-center justify-between', task.active && 'bg-[#34363a]')}
        >
          <span className="flex flex-1 items-center">{task.icon}</span>
          <span className={clsx('h-[2px]', task.active ? 'w-full' : 'w-10', task.open && 'bg-[#76b9ed]')} />
        </button>
      ))}
      <div className="ml-auto flex items-center">
        <button aria-label="Show hidden icons">
          <Svg w={12} h={7}><path d="M1 6.500l5-5 5 5" stroke="#fff" strokeWidth="1.300" /></Svg>
        </button>
        <button aria-label="Antivirus" className="ml-[10px]">
          <Svg w={16} h={16}>
            <path d="M0 0h16v16H0z" fill="#d8141c" />
            <path d="M2.500 9.500C3 4 8 2 12.500 4.500M3 9.500c3-3 6-3 9.500-.5M12 4.500v3M9.500 6L7 12.500c-.5 1.500-2.500 1.500-2.500 0" stroke="#fff" strokeWidth="1.400" />
          </Svg>
        </button>
        <button aria-label="Volume" className="ml-2">
          <Svg w={16} h={16}>
            <path d="M.5 5.500h2.500L6 2v12l-3-3.500H.5zM8.500 5.500c1 1.500 1 3.500 0 5M11 3.500c2 2.500 2 6.500 0 9M13 1.500c3 4 3 9 0 13" stroke="#fff" />
          </Svg>
        </button>
        <button aria-label="Network" className="ml-2">
          <Svg w={16} h={15}>
            <path d="M5 2.500h10.500v8H3.500V7M8.500 11v3M5 14.500h8M.5 .5h4v4h-4zM2.500 5v4" stroke="#fff" />
          </Svg>
        </button>
        <button className="ml-2 w-7 text-center leading-[17px]">
          БГР
          <br />
          BGPT
        </button>
        <button aria-label="Notifications" className="ml-4">
          <Svg w={17} h={16}><path d="M.5 .5h16v12h-5l-3 3v-3h-8z" stroke="#fff" /></Svg>
        </button>
        <div className="mr-1 ml-[19px] h-10 w-px bg-[#555]" />
      </div>
    </footer>
  );
}

// Striped highlight frame and numbered arrow drawn over the sheet
function Callout() {
  return (
    <svg className="pointer-events-none absolute top-0 left-0 z-20" width="1600" height="880" viewBox="0 0 1600 880">
      <defs>
        <pattern id="stripe-x" x="178" y="226" width="15" height="5" patternUnits="userSpaceOnUse">
          <path d="M0 5l3-5h8l-3 5z" fill="#c34d58" />
        </pattern>
        <pattern id="stripe-x2" x="1065" y="853" width="15" height="5" patternUnits="userSpaceOnUse">
          <path d="M0 5l4-5h8l-4 5z" fill="#c34d58" />
        </pattern>
        <pattern id="stripe-y" x="168" y="505" width="5" height="15" patternUnits="userSpaceOnUse">
          <path d="M0 4l5-4v8l-5 4z" fill="#c34d58" />
        </pattern>
        <pattern id="stripe-y2" x="1100" y="593" width="5" height="15" patternUnits="userSpaceOnUse">
          <path d="M0 4l5-4v8l-5 4z" fill="#c34d58" />
        </pattern>
      </defs>
      <path d="M168 226h937v632H168zM173 231v622h927V231z" fill="#fff" fillOpacity=".6" fillRule="evenodd" />
      <path d="M173 226h932v5H173z" fill="url(#stripe-x)" />
      <path d="M173 853h927v5H173z" fill="url(#stripe-x2)" />
      <path d="M168 231h5v622h-5z" fill="url(#stripe-y)" />
      <path d="M1100 231h5v622h-5z" fill="url(#stripe-y2)" />
      <path d="M168 226h5l-5 4zM168 853l5 5h-5zM1105 851v7h-9z" fill="#c34d58" />
      <path d="M1169.600 619.300L1216.400 608.700 1211.400 624.300 1541 736 1537 746 1206.400 639.700 1201.400 655z" fill="#c34d58" />
      <circle cx="1561.500" cy="747.500" r="19" fill="#fff" stroke="#c34d58" strokeWidth="10" />
      <text x="1561" y="754" fontSize="18" fontWeight="300" fill="#c34d58" textAnchor="middle">1</text>
    </svg>
  );
}

export default function App() {
  return (
    <div className="relative flex h-screen flex-col overflow-hidden bg-[#e6e6e6] font-['Noto_Sans',sans-serif] text-[11px]">
      <header className="relative shrink-0 bg-[#217346]">
        <TitleArt />
        <TitleBar />
        <TabBar />
      </header>
      <Ribbon />
      <FormulaBar />
      <main className="flex min-h-0 flex-1">
        <Sheet />
        <VerticalScroll />
      </main>
      <SheetTabs />
      <StatusBar />
      <Taskbar />
      <Callout />
    </div>
  );
}
